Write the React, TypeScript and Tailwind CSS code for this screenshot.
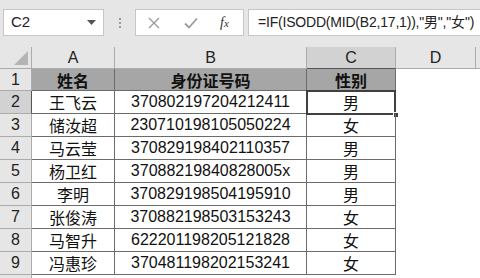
import React from 'react';

const ROWS = [
  ['王飞云', '370802197204212411', '男'],
  ['储汝超', '230710198105050224', '女'],
  ['马云莹', '370829198402110357', '男'],
  ['杨卫红', '37088219840828005x', '男'],
  ['李明', '370829198504195910', '男'],
  ['张俊涛', '370882198503153243', '女'],
  ['马智升', '622201198205121828', '女'],
  ['冯惠珍', '370481198202153241', '女'],
];

const FONT = { fontFamily: '"Liberation Sans", Arial, "Noto Sans CJK SC", sans-serif' };
const CJK = { fontFamily: '"Noto Sans CJK SC", sans-serif' };

function Toolbar() {
  return (
    <div className="flex h-[47px] items-start bg-[#e6e6e6] pl-[3px] pt-[9px]">
      <div className="relative flex h-[27px] w-[101px] shrink-0 items-center border border-[#c6c6c6] bg-white pl-[7px] text-[15px] text-[#222]">
        C2
        <svg className="absolute right-[7px] top-[10px]" width="9" height="5" viewBox="0 0 9 5">
          <path d="M0 0h9L4.5 5z" fill="#555" />
        </svg>
      </div>
      <div className="flex h-[27px] w-[31px] shrink-0 flex-col items-center justify-center gap-[2px]">
        <span className="h-[2px] w-[2px] bg-[#9a9a9a]" />
        <span className="h-[2px] w-[2px] bg-[#9a9a9a]" />
        <span className="h-[2px] w-[2px] bg-[#9a9a9a]" />
      </div>
      <div className="flex h-[27px] w-[109px] shrink-0 items-center border border-[#c6c6c6] bg-white">
        <svg className="ml-[12px]" width="12" height="12" viewBox="0 0 12 12">
          <path d="M1 1l10 10M11 1L1 11" stroke="#9a9a9a" strokeWidth="1.3" fill="none" />
        </svg>
        <svg className="ml-[24px]" width="14" height="12" viewBox="0 0 14 12">
          <path d="M1 6.5l4 4L13 1.5" stroke="#9a9a9a" strokeWidth="1.8" fill="none" />
        </svg>
        <span
          className="ml-[22px] text-[14px] italic text-[#333]"
          style={{ fontFamily: '"Liberation Serif", serif' }}
        >
          f<span className="text-[11px]">x</span>
        </span>
      </div>
      <div className="ml-[4px] flex h-[27px] min-w-0 flex-1 items-center overflow-hidden border border-r-0 border-[#c6c6c6] bg-white pl-[9px] text-[14px] tracking-[-0.2px] whitespace-nowrap text-[#222]">
        =IF(ISODD(MID(B2,17,1)),"男","女")
      </div>
    </div>
  );
}

function App() {
  const cols = ['A', 'B', 'C', 'D'];
  return (
    <div className="h-[278px] w-[480px] overflow-hidden bg-white" style={FONT}>
      <Toolbar />
      <div className="grid grid-cols-[32px_83px_192px_89px_80px_1fr] text-[16px] text-[#111]">
        {/* column header row */}
        <div className="relative h-[22px] border-b border-r border-[#ababab] bg-[#e6e6e6]">
          <svg className="absolute bottom-[3px] right-[3px]" width="14" height="14" viewBox="0 0 14 14">
            <path d="M14 0V14H0z" fill="#b4b4b4" />
          </svg>
        </div>
        {cols.map((c) => (
          <div
            key={c}
            className={`flex h-[22px] items-center justify-center border-r text-[16px] text-[#222] ${
              c === 'C'
                ? 'border-b border-b-[#555] border-r-[#ababab] bg-[#d2d2d2]'
                : 'border-b border-[#ababab] bg-[#e6e6e6]'
            }`}
          >
            {c}
          </div>
        ))}
        <div className="h-[22px] border-b border-[#ababab] bg-[#e6e6e6]" />

        {/* row 1 */}
        <div className="flex h-[22px] items-center justify-center border-b border-r border-[#ababab] bg-[#e6e6e6] text-[16px] text-[#222]">
          1
        </div>
        {['姓名', '身份证号码', '性别'].map((t) => (
          <div
            key={t}
            className="flex h-[22px] items-center justify-center border-b border-r border-[#6b6b6b] bg-[#a6a6a6] font-bold"
            style={CJK}
          >
            {t}
          </div>
        ))}
        <div className="h-[22px]" />
        <div className="h-[22px]" />

        {ROWS.map((r, i) => (
          <React.Fragment key={i}>
            <div
              className={`flex h-[23px] items-center justify-center border-b border-r border-[#ababab] text-[16px] text-[#222] ${
                i === 0 ? 'bg-[#d2d2d2] border-r-[#555]' : 'bg-[#e6e6e6]'
              }`}
            >
              {i + 2}
            </div>
            <div
              className="flex h-[23px] items-center justify-center border-b border-r border-[#6b6b6b]"
              style={CJK}
            >
              {r[0]}
            </div>
            <div className="flex h-[23px] items-center justify-center border-b border-r border-[#6b6b6b]">
              {r[1]}
            </div>
            <div
              className="relative flex h-[23px] items-center justify-center border-b border-r border-[#6b6b6b]"
              style={CJK}
            >
              {r[2]}
              {i === 0 && (
                <>
                  <div className="absolute inset-x-[-1px] bottom-[-2px] top-[-1px] border-2 border-[#404040]" />
                  <div className="absolute bottom-[-5px] right-[-4px] h-[6px] w-[6px] border border-white bg-[#404040]" />
                </>
              )}
            </div>
            <div className="h-[23px]" />
            <div className="h-[23px]" />
          </React.Fragment>
        ))}
        <div className="h-[23px] border-r border-[#ababab] bg-[#e6e6e6]" />
      </div>
    </div>
  );
}

export default App;
